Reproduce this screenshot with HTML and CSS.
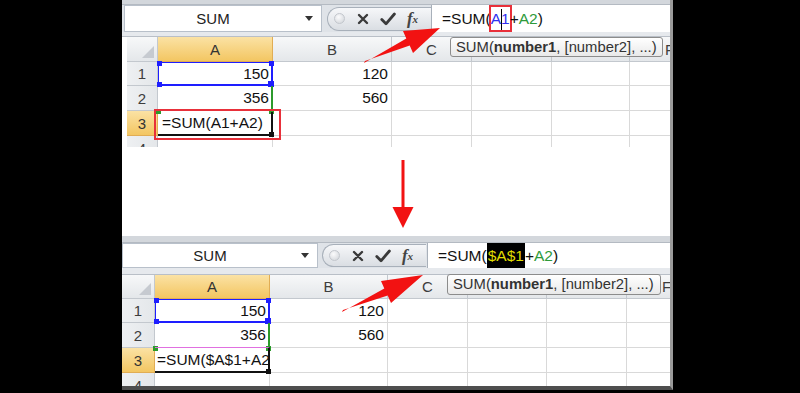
FILE: index.html
```html
<!DOCTYPE html>
<html lang="en">
<head>
    <meta charset="UTF-8">
    <meta name="viewport" content="width=device-width, initial-scale=1.0">
    <title>Absolute reference in SUM</title>
    <link rel="stylesheet" href="styles.css">
</head>
<body>

    <div class="panel">

        <!-- before: relative reference -->
        <div class="sheet sheet-top">
            <div class="strip"></div>
            <div class="fbar">
                <div class="namebox"><span class="name">SUM</span><span class="drop"></span></div>
                <div class="btns">
                    <span class="btn"><span class="dot"></span></span>
                    <span class="btn btn-x"><svg width="12" height="12" viewBox="0 0 12 12"><path d="M2 2L10 10M10 2L2 10" stroke="#3a3a3a" stroke-width="2.4" stroke-linecap="round"/></svg></span>
                    <span class="btn btn-ok"><svg width="16" height="14" viewBox="0 0 16 14"><path d="M1.8 7.6L6 11.8L14.4 2" fill="none" stroke="#3a3a3a" stroke-width="2.8" stroke-linecap="round" stroke-linejoin="round"/></svg></span>
                    <span class="btn fx"><i>f</i><sub>x</sub></span>
                </div>
                <div class="formula">=SUM(<span class="refbox"><span class="ref-a1">A</span><span class="caret"></span><span class="ref-a1">1</span></span>+<span class="ref-a2">A2</span>)</div>
            </div>
            <div class="fsep"></div>
            <div class="grid">
                <div class="hd corner"></div><div class="hd on">A</div><div class="hd">B</div><div class="hd">C</div><div class="hd"></div><div class="hd"></div><div class="hd">F</div>
                <div class="hd rh">1</div><div class="c num">150</div><div class="c num">120</div><div class="c"></div><div class="c"></div><div class="c"></div><div class="c"></div>
                <div class="hd rh">2</div><div class="c num">356</div><div class="c num">560</div><div class="c"></div><div class="c"></div><div class="c"></div><div class="c"></div>
                <div class="hd rh on">3</div><div class="c edit">=SUM(A1+A2)</div><div class="c"></div><div class="c"></div><div class="c"></div><div class="c"></div><div class="c"></div>
                <div class="hd rh">4</div><div class="c"></div><div class="c"></div><div class="c"></div><div class="c"></div><div class="c"></div><div class="c"></div>

                <div class="range range-a1"><i class="h tl"></i><i class="h tr"></i><i class="h bl"></i><i class="h br"></i></div>
                <div class="range range-a2"><i class="h bl"></i><i class="h br"></i></div>
                <div class="range range-a3"><i class="h br"></i></div>
                <div class="mark"></div>
            </div>
            <div class="tip">SUM(<b>number1</b>, [number2], ...)</div>
        </div>

        <div class="gap"></div>

        <!-- after: F4 turns it absolute -->
        <div class="sheet sheet-bottom">
            <div class="strip"></div>
            <div class="fbar">
                <div class="namebox"><span class="name">SUM</span><span class="drop"></span></div>
                <div class="btns">
                    <span class="btn"><span class="dot"></span></span>
                    <span class="btn btn-x"><svg width="12" height="12" viewBox="0 0 12 12"><path d="M2 2L10 10M10 2L2 10" stroke="#3a3a3a" stroke-width="2.4" stroke-linecap="round"/></svg></span>
                    <span class="btn btn-ok"><svg width="16" height="14" viewBox="0 0 16 14"><path d="M1.8 7.6L6 11.8L14.4 2" fill="none" stroke="#3a3a3a" stroke-width="2.8" stroke-linecap="round" stroke-linejoin="round"/></svg></span>
                    <span class="btn fx"><i>f</i><sub>x</sub></span>
                </div>
                <div class="formula">=SUM(<span class="abs">$A$1</span>+<span class="ref-a2">A2</span>)</div>
            </div>
            <div class="fsep"></div>
            <div class="grid">
                <div class="hd corner"></div><div class="hd on">A</div><div class="hd">B</div><div class="hd">C</div><div class="hd"></div><div class="hd"></div><div class="hd">F</div>
                <div class="hd rh">1</div><div class="c num">150</div><div class="c num">120</div><div class="c"></div><div class="c"></div><div class="c"></div><div class="c"></div>
                <div class="hd rh">2</div><div class="c num">356</div><div class="c num">560</div><div class="c"></div><div class="c"></div><div class="c"></div><div class="c"></div>
                <div class="hd rh on">3</div><div class="c edit">=SUM($A$1+A2</div><div class="c"></div><div class="c"></div><div class="c"></div><div class="c"></div><div class="c"></div>
                <div class="hd rh">4</div><div class="c"></div><div class="c"></div><div class="c"></div><div class="c"></div><div class="c"></div><div class="c"></div>

                <div class="range range-a1"><i class="h tl"></i><i class="h tr"></i><i class="h bl"></i><i class="h br"></i></div>
                <div class="range range-a2"><i class="h bl"></i><i class="h br"></i></div>
                <div class="range range-a3"><i class="h br"></i></div>
            </div>
            <div class="tip">SUM(<b>number1</b>, [number2], ...)</div>
        </div>

    </div>

    <svg class="arrows" width="800" height="393" viewBox="0 0 800 393">
        <polygon points="365,61 409.7,45.6 413,52.9 440,28 403,31.1 406.3,38.4 364,63"/>
        <polygon points="401.5,160 404.5,160 404.5,207 413.5,207 403,228 392.5,207 401.5,207"/>
        <polygon points="343,310 387.7,295.6 391,302.9 423,275 381,281.1 384.3,288.4 342,312"/>
    </svg>

</body>
</html>
```

FILE: styles.css
```css
body {
    margin: 0;
    width: 800px;
    height: 393px;
    overflow: hidden;
    position: relative;
    background-color: #000;
    font-family: "Liberation Sans", Arial, sans-serif;
}
.panel {
    margin-left: 122px;
    width: 548px;
    height: 386px;
    background-color: #fff;
    border-right: 3px solid #9a9a9a;
    border-bottom: 4px solid #4e4e4e;
    overflow: hidden;
}
.sheet {
    position: relative;
}
.strip {
    height: 4px;
    background-color: #d3d7dc;
    border-bottom: 1px solid #b4bac2;
}
.sheet-bottom .strip {
    height: 6px;
}
.fbar {
    display: flex;
    align-items: center;
    height: 27px;
    background-color: #dfe3e8;
}
.sheet-top .fbar {
    padding-left: 2px;
}
.sheet-bottom .fbar {
    height: 25px;
}
.namebox {
    width: 198px;
    height: 100%;
    box-sizing: border-box;
    display: flex;
    align-items: center;
    background-color: #fff;
    border: 1px solid #b8c0ca;
}
.sheet-bottom .namebox {
    width: 196px;
}
.name {
    flex: 1;
    text-align: center;
    font-size: 15px;
    color: #222;
}
.drop {
    width: 0;
    height: 0;
    margin: 0 8px 0 4px;
    border-left: 4px solid transparent;
    border-right: 4px solid transparent;
    border-top: 5px solid #333;
}
.btns {
    margin-left: 5px;
    width: 104px;
    height: 24px;
    box-sizing: border-box;
    display: flex;
    align-items: center;
    background: linear-gradient(#f6f7f9, #dadee3);
    border: 1px solid #a8b0ba;
    border-right: none;
    border-radius: 13px 0 0 13px;
}
.sheet-bottom .btns {
    margin-left: 4px;
    height: 23px;
}
.btn {
    display: flex;
    align-items: center;
    justify-content: center;
    width: 25px;
    height: 100%;
}
.btn:first-child {
    width: 22px;
}
.dot {
    width: 9px;
    height: 9px;
    border-radius: 50%;
    background: radial-gradient(circle at 40% 35%, #fbfbfc, #cfd3d8);
    border: 1px solid #c3c7cd;
}
.fx {
    font-family: "Liberation Serif", serif;
    font-size: 17px;
    font-weight: bold;
    color: #444;
}
.fx sub {
    font-size: 11px;
    font-style: italic;
    vertical-align: -2px;
}
.formula {
    flex: 1;
    height: 100%;
    box-sizing: border-box;
    padding-left: 10px;
    background-color: #fff;
    border-left: 1px solid #a8b0ba;
    font-size: 15.5px;
    line-height: 27px;
    white-space: nowrap;
    color: #111;
}
.sheet-bottom .formula {
    line-height: 25px;
    margin-left: 1px;
}
.refbox {
    display: inline-block;
    vertical-align: top;
    height: 27px;
    box-sizing: border-box;
    margin: 0 -2px 0 -2px;
    border: 2px solid #e8303a;
    line-height: 23px;
}
.caret {
    display: inline-block;
    width: 1px;
    height: 21px;
    margin-right: -1px;
    background-color: #000;
    vertical-align: middle;
}
.ref-a1 {
    color: #3030f0;
}
.ref-a2 {
    color: #2e9a3a;
}
.abs {
    display: inline-block;
    vertical-align: top;
    background-color: #000;
    color: #e2de00;
    padding: 0 1px;
}
.fsep {
    height: 4px;
    background-color: #e6e9ed;
    border-bottom: 1px solid #b9bfc7;
}
.sheet-bottom .fsep {
    height: 6px;
}

/* sheet grid */
.grid {
    position: relative;
    display: grid;
    overflow: hidden;
}
.sheet-top .grid {
    margin-left: 5px;
    height: 110px;
    grid-template-columns: 31px 115px 119px 80px 80px 78px 80px;
    grid-template-rows: 25px 24px 25px 25px 25px;
}
.sheet-bottom .grid {
    height: 111px;
    grid-template-columns: 33px 115px 118px 80px 79px 80px 80px;
    grid-template-rows: 24px 24px 25px 25px 25px;
}
.c, .hd {
    box-sizing: border-box;
    display: flex;
    align-items: center;
    white-space: nowrap;
    overflow: hidden;
    font-size: 15.5px;
}
.c {
    padding: 0 3px;
    color: #111;
    border-right: 1px solid #d9d9d9;
    border-bottom: 1px solid #d9d9d9;
}
.num {
    justify-content: flex-end;
}
.edit {
    padding-left: 4px;
}
.sheet-bottom .edit {
    padding-left: 2px;
}
.hd {
    justify-content: center;
    font-size: 15px;
    color: #3d3d3d;
    background: linear-gradient(#f7f8f9, #e4e7ea);
    border-right: 1px solid #c3c8ce;
    border-bottom: 1px solid #c3c8ce;
}
.rh {
    background: linear-gradient(90deg, #eef0f2, #e4e7ea);
}
.hd.on {
    background: linear-gradient(#fbe2a4, #f3c662);
    border-right-color: #e1ad54;
    border-bottom-color: #e1ad54;
    color: #333;
}
.corner {
    position: relative;
}
.corner::after {
    content: "";
    position: absolute;
    right: 3px;
    bottom: 3px;
    border-left: 12px solid transparent;
    border-bottom: 12px solid #c6cad0;
}

/* reference highlights */
.range {
    position: absolute;
    box-sizing: border-box;
}
.h {
    position: absolute;
    width: 5px;
    height: 5px;
    background-color: currentColor;
}
.tl { left: -2px; top: -2px; }
.tr { right: -3px; top: -2px; }
.bl { left: -2px; bottom: -3px; }
.br { right: -3px; bottom: -3px; }
.range-a1 {
    color: #1e1eff;
    border: 1px solid #1e1eff;
    border-right-width: 2px;
    border-bottom-width: 2px;
}
.range-a1 .br {
    width: 6px;
    height: 6px;
}
.range-a2 {
    color: #2c9a2c;
    border-right: 2px solid #2c9a2c;
}
.range-a3 {
    color: #111;
    border-right: 2px solid #111;
    border-bottom: 2px solid #111;
}
.sheet-top .range-a1 { left: 31px; top: 25px; width: 115px; height: 24px; }
.sheet-top .range-a2 { left: 31px; top: 49px; width: 115px; height: 25px; }
.sheet-top .range-a3 { left: 31px; top: 75px; width: 115px; height: 24px; }
.sheet-bottom .range-a1 { left: 33px; top: 24px; width: 115px; height: 24px; }
.sheet-bottom .range-a2 { left: 33px; top: 48px; width: 115px; height: 25px; }
.sheet-bottom .range-a3 {
    left: 33px;
    top: 72px;
    width: 115px;
    height: 26px;
    border-top: 1px solid #e070e0;
}
.mark {
    position: absolute;
    left: 27px;
    top: 72px;
    width: 127px;
    height: 31px;
    box-sizing: border-box;
    border: 2px solid #e8303a;
}

/* argument tooltip */
.tip {
    position: absolute;
    box-sizing: border-box;
    height: 20px;
    padding: 0 5px;
    font-size: 14.8px;
    line-height: 18px;
    color: #333;
    white-space: nowrap;
    background: linear-gradient(#ffffff, #e9e9e9);
    border: 1px solid #8c8c8c;
    border-radius: 3px;
}
.sheet-top .tip {
    left: 328px;
    top: 37px;
    width: 213px;
}
.sheet-bottom .tip {
    left: 325px;
    top: 38px;
    width: 214px;
    height: 21px;
    line-height: 19px;
}
.gap {
    height: 89px;
}
.arrows {
    position: absolute;
    left: 0;
    top: 0;
    fill: #f21212;
}
```
